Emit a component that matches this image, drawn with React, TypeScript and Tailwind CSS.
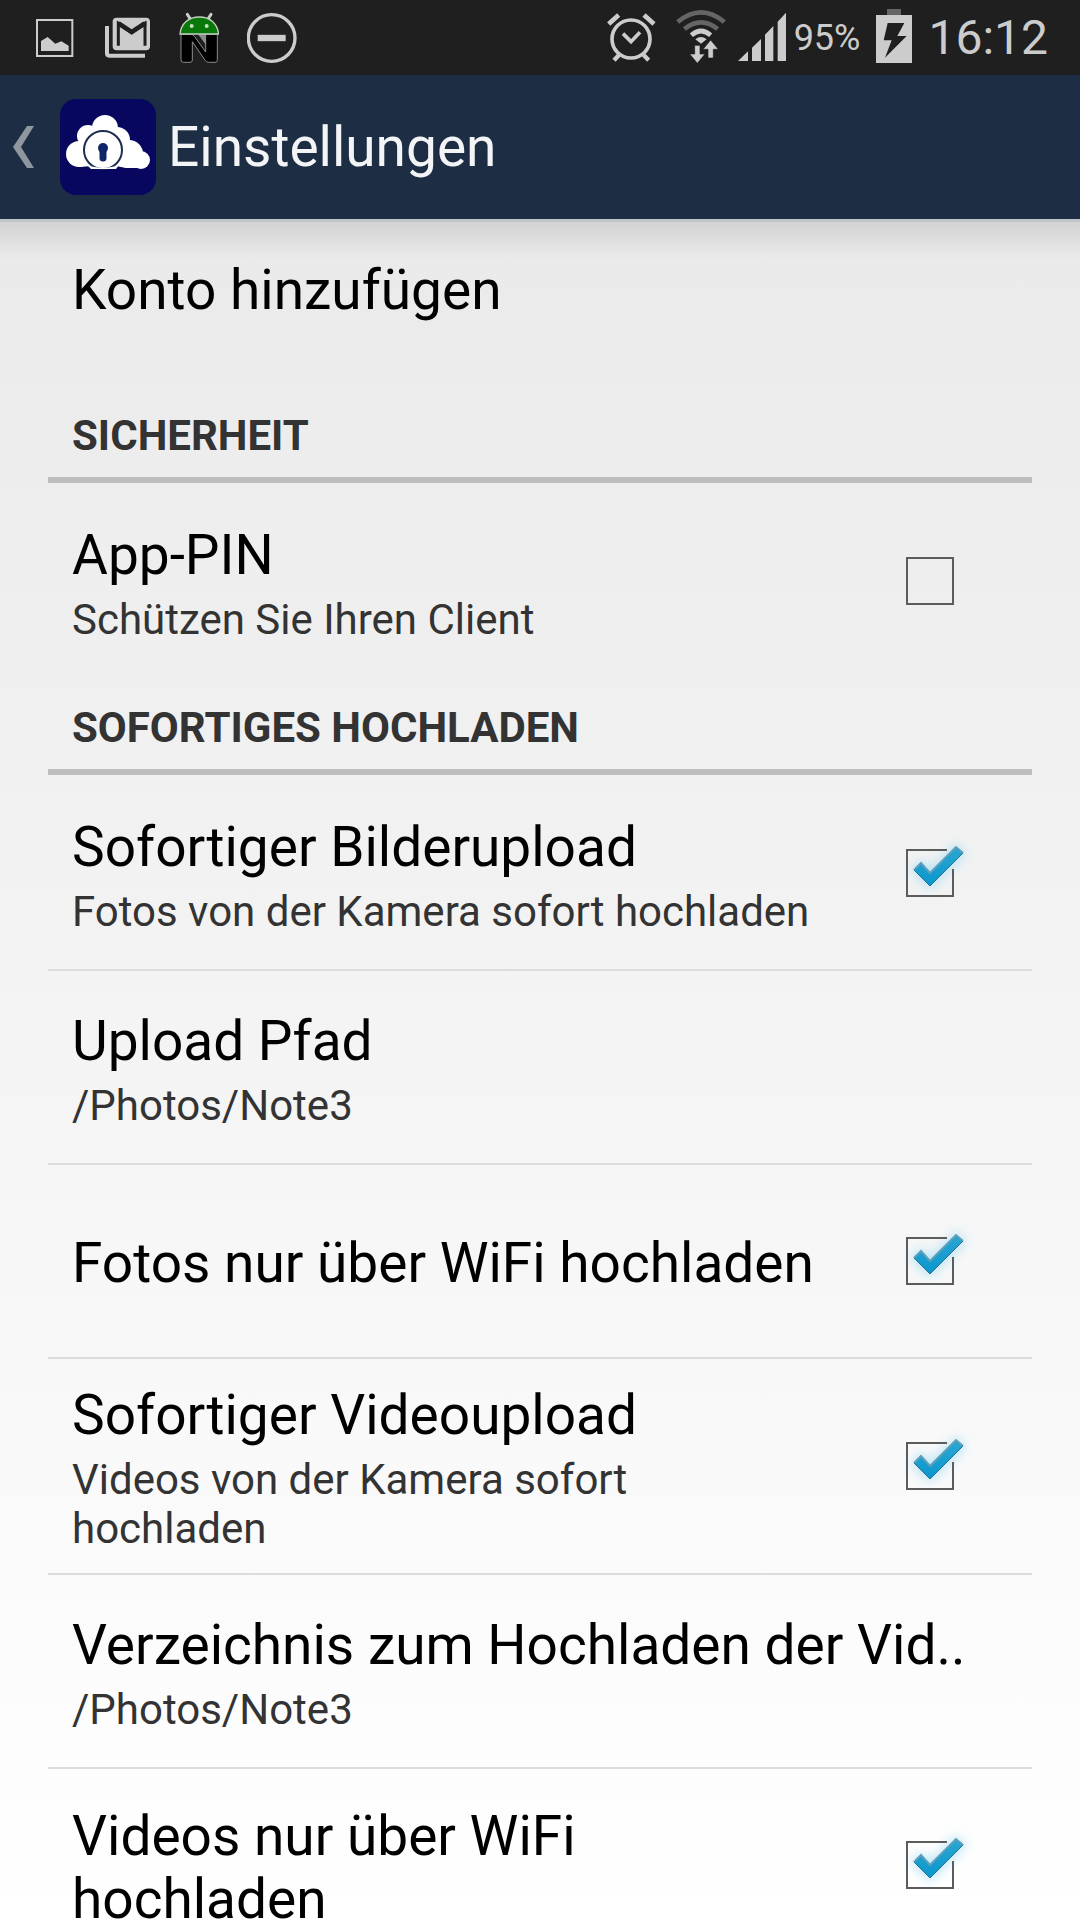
import React, { useState } from 'react';

const ImageIcon = () => (
    <svg className="h-[75px] w-10" viewBox="105 0 120 225" aria-hidden="true">
        <rect x="111" y="60" width="106" height="108" fill="none" stroke="#cccccc" strokeWidth="6" />
        <path d="M123 153V123L143 111L166 131L184 124L206 137V153Z" fill="#cccccc" />
    </svg>
);

const MailIcon = () => (
    <svg className="h-[75px] w-12" viewBox="309 0 144 225" aria-hidden="true">
        <path d="M321 78V160Q321 167 328 167H435" fill="none" stroke="#cccccc" strokeWidth="12" />
        <rect x="338" y="53" width="112" height="98" rx="12" fill="#cccccc" />
        <path d="M355 137V70L395 98L435 70V137" fill="none" stroke="#1f1f1f" strokeWidth="9" />
        <path d="M351 65H361L395 88L429 65H439V76L395 104L351 76Z" fill="#1f1f1f" />
    </svg>
);

const AndroidIcon = () => (
    <svg className="h-[75px] w-10" viewBox="537 0 120 225" aria-hidden="true">
        <path d="M562 43L573 60M633 43L622 60" stroke="#c4d0c4" strokeWidth="9" strokeLinecap="round" />
        <path
            d="M543 103H573Q580 103 584 110L617 156V103H652V181Q652 187 645 187H626Q620 187 616 182L577 125V180Q577 187 570 187H550Q543 187 543 180Z"
            fill="#000000"
            stroke="#8c8c8c"
            strokeWidth="3"
        />
        <path d="M594 103H618V135Z" fill="#8c8c8c" />
        <path d="M540 102C543 70 566 51 598 51S652 70 656 102Z" fill="#087808" stroke="#c4d0c4" strokeWidth="4" />
        <circle cx="575" cy="78" r="6" fill="#c4e0c4" />
        <circle cx="620" cy="78" r="6" fill="#c4e0c4" />
    </svg>
);

const BlockedIcon = () => (
    <svg className="h-[75px] w-[50px]" viewBox="738 0 150 225" aria-hidden="true">
        <circle cx="812" cy="114" r="70" fill="none" stroke="#cccccc" strokeWidth="10" />
        <path d="M770 114H854" stroke="#cccccc" strokeWidth="19" />
    </svg>
);

const AlarmIcon = () => (
    <svg className="h-[75px] w-[50px]" viewBox="51 0 150 225" aria-hidden="true">
        <g fill="none" stroke="#cccccc">
            <circle cx="126" cy="117" r="57" strokeWidth="11" />
            <path d="M59 72L89 45M195 72L165 45" strokeWidth="14" />
            <path d="M90 165L75 181M164 165L179 181" strokeWidth="13" />
            <path d="M102 101L126 125L153 97" strokeWidth="11" />
        </g>
    </svg>
);

const WifiIcon = () => (
    <svg className="h-[75px] w-[50px]" viewBox="258 0 150 225" aria-hidden="true">
        <g fill="none" strokeWidth="14">
            <path d="M263 66Q333 8 403 66" stroke="#656565" />
            <path d="M283 87Q333 47 383 87" stroke="#656565" />
            <path d="M304 106Q333 80 362 106" stroke="#cccccc" />
        </g>
        <path d="M316 118Q333 104 350 118L333 131Z" fill="#cccccc" />
        <path
            d="M314 136H330V162H345L322 190L299 162H314ZM354 174H370V148H385L362 120L339 148H354Z"
            fill="#cccccc"
            stroke="#1f1f1f"
            strokeWidth="2"
        />
    </svg>
);

const SignalIcon = () => (
    <svg className="h-[75px] w-12" viewBox="441 0 144 225" aria-hidden="true">
        <path d="M441 183L471 154V183ZM483 183V143L510 117V183ZM522 183V104L547 78V183ZM560 183V65L585 38V183Z" fill="#cccccc" />
    </svg>
);

const BatteryIcon = () => (
    <svg className="h-[75px] w-9" viewBox="855 0 108 225" aria-hidden="true">
        <rect x="888" y="27" width="42" height="18" fill="#656565" />
        <rect x="855" y="45" width="108" height="144" fill="#cccccc" />
        <path d="M890 69H940L919 108H947L882 173L902 121H878Z" fill="#1f1f1f" />
    </svg>
);

const CloudLogo = () => (
    <svg className="size-24" viewBox="0 0 96 96" aria-hidden="true">
        <rect width="96" height="96" rx="16" fill="#07075f" />
        <g fill="#ffffff">
            <circle cx="19" cy="55" r="13" />
            <circle cx="28" cy="37" r="11" />
            <circle cx="45" cy="29" r="13" />
            <circle cx="57" cy="41" r="13" />
            <circle cx="69" cy="55" r="14" />
            <circle cx="81" cy="61" r="9" />
            <path d="M19 68L28 40H60L81 69H66L56 67H32Z" />
        </g>
        <circle cx="43" cy="51" r="19" fill="#ffffff" stroke="#1d2d52" strokeWidth="2" />
        <path d="M27 66Q43 72 59 66L56 70H31Z" fill="#ffffff" />
        <circle cx="43" cy="49" r="5" fill="#10246a" />
        <path d="M43 50V59" stroke="#10246a" strokeWidth="7" strokeLinecap="round" />
    </svg>
);

const StatusBar: React.FC = () => {
    return (
        <div className="flex h-[75px] shrink-0 items-center justify-between bg-[#1f1f1f] pl-[35px] pr-8 text-[#cccccc]">
            <div className="flex items-center gap-7">
                <ImageIcon />
                <MailIcon />
                <AndroidIcon />
                <BlockedIcon />
            </div>
            <div className="flex items-center">
                <AlarmIcon />
                <span className="ml-5"><WifiIcon /></span>
                <span className="ml-3"><SignalIcon /></span>
                <span className="ml-2 text-[36px] leading-none">95%</span>
                <span className="ml-4"><BatteryIcon /></span>
                <time className="ml-4 text-[48px] leading-none">16:12</time>
            </div>
        </div>
    );
};

interface CheckItemProps {
    title: string;
    summary?: string;
    initial?: boolean;
    first?: boolean;
}

const rowClass = 'flex min-h-[194px] w-full items-center border-t-2 px-6 text-left';

const ItemText: React.FC<{ title: string; summary?: string }> = ({ title, summary }) => (
    <span className="flex flex-1 flex-col gap-2 pt-[25px] pb-5">
        <span className="text-[55px] leading-[63px] text-black">{title}</span>
        {summary && <span className="text-[42px] leading-[49px] text-[#333333]">{summary}</span>}
    </span>
);

const CheckItem: React.FC<CheckItemProps> = ({ title, summary, initial = true, first = false }) => {
    const [checked, setChecked] = useState(initial);

    return (
        <label className={`${rowClass} ${first ? 'border-transparent' : 'border-[#dcdcdc]'}`}>
            <ItemText title={title} summary={summary} />
            <span className="relative ml-20 mr-[54px] size-12 shrink-0">
                <input
                    type="checkbox"
                    checked={checked}
                    onChange={(e) => setChecked(e.target.checked)}
                    className="block size-12 appearance-none border-2 border-[#5c5c5c] checked:border-transparent"
                />
                {checked && (
                    <svg className="pointer-events-none absolute inset-0 size-12 overflow-visible" viewBox="0 0 48 48" aria-hidden="true">
                        <defs>
                            <filter id="glow" x="-50%" y="-50%" width="200%" height="200%">
                                <feGaussianBlur stdDeviation="6" />
                            </filter>
                            <linearGradient id="tick" x1="0" y1="0" x2="0" y2="1">
                                <stop offset="0" stopColor="#2ba6d2" />
                                <stop offset="1" stopColor="#0a97cf" />
                            </linearGradient>
                        </defs>
                        <path d="M8 21L15 14L24 24L50 -2L57 4L24 37Z" fill="#9fdcf5" stroke="#9fdcf5" strokeWidth="4" opacity="0.8" filter="url(#glow)" />
                        <path d="M41 1H1V47H47V20" fill="none" stroke="#5c5c5c" strokeWidth="2" />
                        <path d="M8 21L15 14L24 24L50 -2L57 4L24 37Z" fill="url(#tick)" />
                        <path d="M8 21L15 14L24 24L50 -2L57 4" fill="none" stroke="#5f9fb8" strokeWidth="2" />
                        <path d="M8 21L24 37L57 4" fill="none" stroke="#26708e" strokeWidth="1" />
                    </svg>
                )}
            </span>
        </label>
    );
};

const LinkItem: React.FC<{ title: string; summary?: string }> = ({ title, summary }) => (
    <button type="button" className={`${rowClass} border-[#dcdcdc]`}>
        <ItemText title={title} summary={summary} />
    </button>
);

const SectionTitle: React.FC<{ children: React.ReactNode }> = ({ children }) => (
    <h2 className="flex h-[98px] items-center border-b-6 border-[#bebebe] px-6 pt-2 text-[42px] leading-[49px] font-bold text-[#333333]">
        {children}
    </h2>
);

const App: React.FC = () => {
    return (
        <div className="flex h-screen flex-col overflow-hidden bg-white font-[Roboto,sans-serif]">
            <StatusBar />

            <header className="flex h-36 shrink-0 items-center bg-[#1d2d44] pl-3">
                <button type="button" className="flex items-center gap-[26px]" aria-label="Zurück">
                    <svg className="h-[42px] w-[22px]" viewBox="0 0 22 42" aria-hidden="true">
                        <path d="M1 21L15 0H22L9 21L22 42H15Z" fill="#8e969f" />
                    </svg>
                    <CloudLogo />
                </button>
                <h1 className="ml-3 text-[55px] leading-[63px] text-[#f3f4f6]">Einstellungen</h1>
            </header>

            <main className="flex-1 overflow-hidden bg-linear-to-b from-[#eaeaea] to-white">
                {/* shadow under the action bar */}
                <div className="h-10 border-t-3 border-[#c1c5c9] bg-linear-to-b from-black/10 to-transparent" />
                <div className="-mt-10 px-12">
                    <button type="button" className="flex h-[166px] w-full items-center px-6 pb-7 text-left">
                        <ItemText title="Konto hinzufügen" />
                    </button>

                    <SectionTitle>SICHERHEIT</SectionTitle>
                    <CheckItem title="App-PIN" summary="Schützen Sie Ihren Client" initial={false} first />

                    <SectionTitle>SOFORTIGES HOCHLADEN</SectionTitle>
                    <CheckItem title="Sofortiger Bilderupload" summary="Fotos von der Kamera sofort hochladen" first />
                    <LinkItem title="Upload Pfad" summary="/Photos/Note3" />
                    <CheckItem title="Fotos nur über WiFi hochladen" />
                    <CheckItem title="Sofortiger Videoupload" summary="Videos von der Kamera sofort hochladen" />
                    <LinkItem title="Verzeichnis zum Hochladen der Vid.." summary="/Photos/Note3" />
                    <CheckItem title="Videos nur über WiFi hochladen" />
                </div>
            </main>
        </div>
    );
};

export default App;
